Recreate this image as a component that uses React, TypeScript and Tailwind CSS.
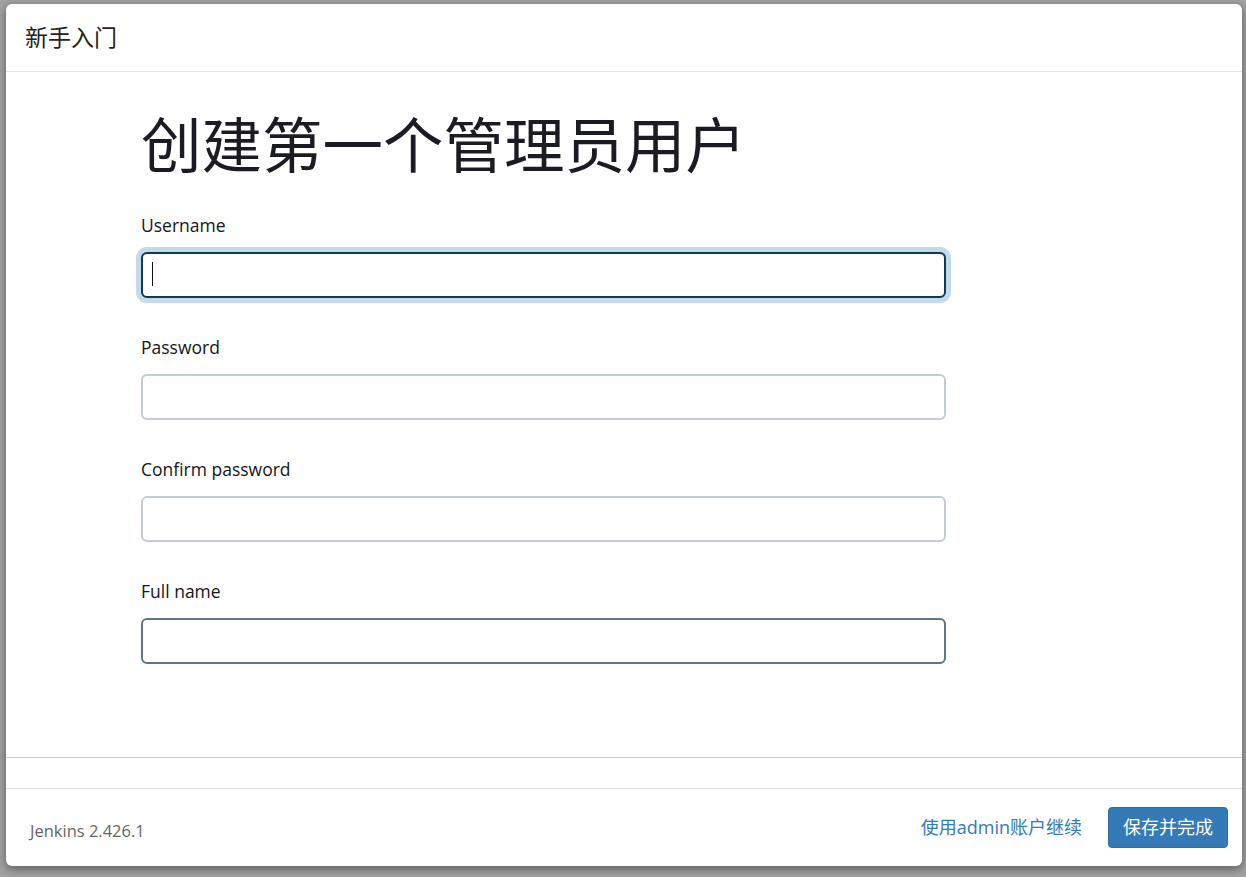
import React from "react";

const cjk = "font-['Open_Sans','Noto_Sans_CJK_SC',sans-serif]";

type FieldProps = {
  label: string;
  type?: string;
  state?: "focus" | "hover" | "idle";
};

function Field({ label, type = "text", state = "idle" }: FieldProps) {
  const border =
    state === "focus"
      ? "border-[#0b3a5a] shadow-[0_0_0_5px_#c3dae8]"
      : state === "hover"
        ? "border-[#5f7785]"
        : "border-[#c3ccd1]";
  return (
    <div className="flex flex-col">
      <label className="h-6 text-[17.5px] leading-6 text-[#14141a]">{label}</label>
      <div className="relative mt-[15px] w-[805px]">
        <input
          type={type}
          className={`box-border h-[46px] w-full rounded-md border-2 bg-white px-3 caret-transparent outline-none ${border}`}
        />
        {state === "focus" && (
          <span className="absolute left-[11px] top-[10px] h-[24px] w-px bg-[#111]" />
        )}
      </div>
    </div>
  );
}

export default function App() {
  return (
    <div className={`h-[877px] w-[1246px] overflow-hidden bg-[#a2a2a2] pl-[6px] pt-[4px] ${cjk}`}>
      <div className="flex h-[862px] w-[1236px] flex-col rounded-md bg-white shadow-[0_3px_10px_rgba(0,0,0,0.45)]">
        {/* header */}
        <div className="box-border flex h-[68px] items-center border-b border-[#e5e5e5] pl-[19px]">
          <h4 className="text-[23px] leading-none text-[#222]">新手入门</h4>
        </div>

        {/* body */}
        <div className="box-border h-[686px] border-b border-[#cfcfcf] pl-[135px] pt-[40px]">
          <h1 className="h-[66px] text-[60.5px] leading-[66px] text-[#1b1b24]">创建第一个管理员用户</h1>
          <div className="mt-[35px] flex flex-col gap-[37px]">
            <Field label="Username" state="focus" />
            <Field label="Password" type="password" />
            <Field label="Confirm password" type="password" />
            <Field label="Full name" state="hover" />
          </div>
        </div>

        <div className="box-border h-[31px] border-b border-[#e5e5e5]" />

        {/* footer */}
        <div className="flex flex-1 items-center justify-between pl-[24px] pr-[14px]">
          <span className="mt-[7px] text-[16.5px] text-[#666]">Jenkins 2.426.1</span>
          <div className="-mt-[1px] flex items-center gap-[26px]">
            <a href="#" className="text-[18px] text-[#337ab7]">
              使用admin账户继续
            </a>
            <button className="box-border h-[41px] w-[120px] rounded border border-[#2e6da4] bg-[#337ab7] text-[18px] text-white">
              保存并完成
            </button>
          </div>
        </div>
      </div>
    </div>
  );
}
